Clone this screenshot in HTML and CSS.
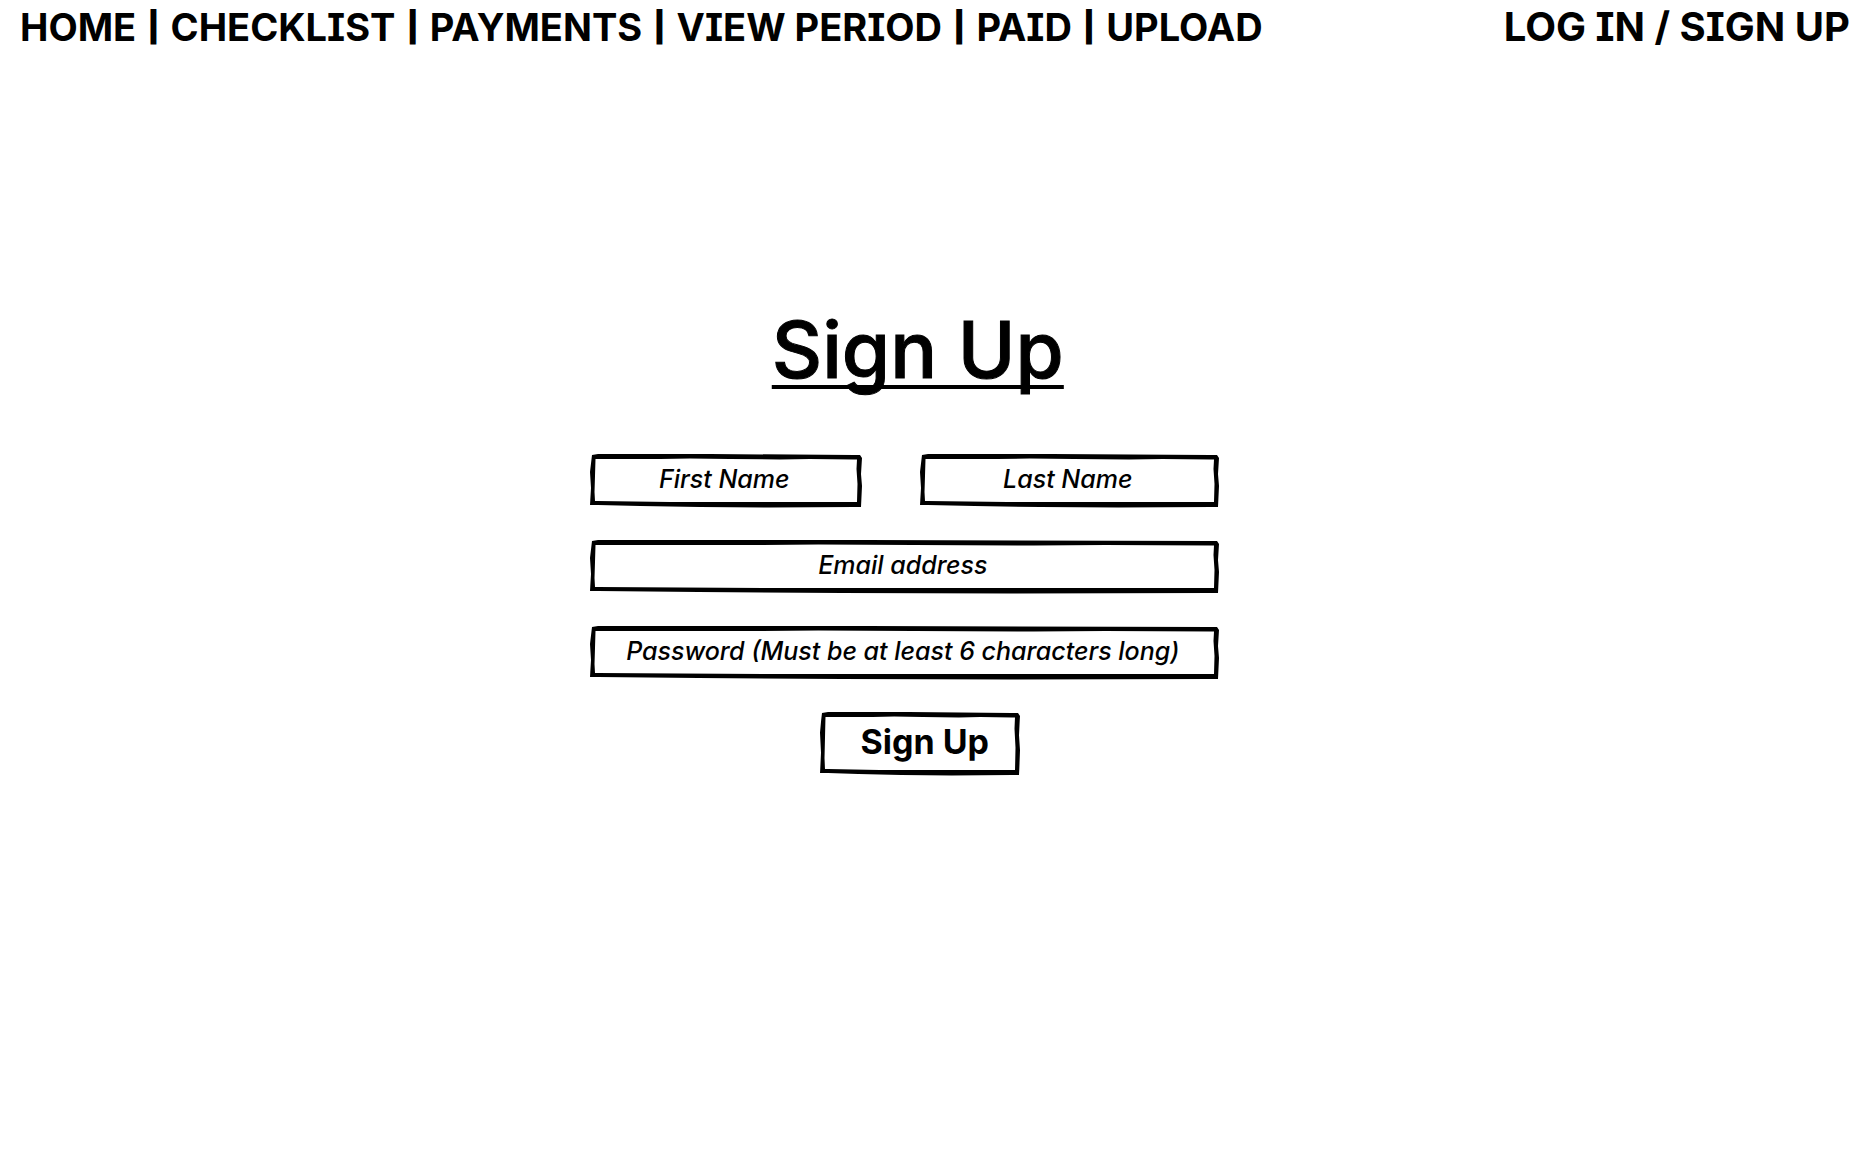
FILE: index.html
```html
<!DOCTYPE html>
<html lang="en">
<head>
<meta charset="utf-8">
<meta name="viewport" content="width=device-width, initial-scale=1">
<title>Sign Up</title>
<link rel="stylesheet" href="styles.css">
</head>
<body>
<header class="topbar">
  <nav class="menu" aria-label="Main">
    <a href="#home">HOME</a><span class="bar">|</span>
    <a href="#checklist">CHECKLIST</a><span class="bar">|</span>
    <a href="#payments">PAYMENTS</a><span class="bar">|</span>
    <a href="#period">VIEW PERIOD</a><span class="bar">|</span>
    <a href="#paid">PAID</a><span class="bar">|</span>
    <a href="#upload">UPLOAD</a>
  </nav>
  <a class="account" href="#login">LOG IN / SIGN UP</a>
</header>
<main class="page">
  <form class="signup">
    <h1 class="title">Sign Up</h1>
    <div class="names">
      <input class="field" type="text" placeholder="First Name" aria-label="First Name">
      <input class="field" type="text" placeholder="Last Name" aria-label="Last Name">
    </div>
    <input class="field" type="email" placeholder="Email address" aria-label="Email address">
    <input class="field" type="password" placeholder="Password (Must be at least 6 characters long)" aria-label="Password">
    <button class="submit" type="submit">Sign Up</button>
  </form>
</main>
</body>
</html>
```
FILE: styles.css
```css
* { box-sizing: border-box; }

body {
  margin: 0;
  background: #fff;
  color: #000;
  font-family: Inter, "Liberation Sans", sans-serif;
  font-feature-settings: "cv08", "cv11";
}

a { color: inherit; text-decoration: none; }

.topbar {
  display: flex;
  justify-content: space-between;
  padding: 2px 24px 0 20px;
  font-size: 40px;
  font-weight: 700;
  line-height: 50px;
  white-space: nowrap;
}

.menu {
  display: flex;
  gap: 12px;
  font-size: 38px;
}

.bar {
  font-size: 28px;
  -webkit-text-stroke: 2px #000;
}

.page { padding: 252px 24px 40px 31.5%; }

.signup {
  display: flex;
  flex-direction: column;
  gap: 32px;
  max-width: 629px;
}

.title {
  align-self: center;
  margin: 0 0 26px 26px;
  font-size: 78px;
  font-weight: 500;
  line-height: 92px;
  text-decoration: underline;
  text-decoration-thickness: 4px;
  text-decoration-skip-ink: none;
  text-underline-offset: 7px;
  -webkit-text-stroke: 1px #000;
}

.names {
  display: grid;
  grid-template-columns: 272fr 299fr;
  gap: 58px;
}

/* Uneven pen-drawn frame, stretched along its edges. */
.field,
.submit {
  border: 8px solid transparent;
  border-image: url("data:image/svg+xml,%3Csvg xmlns='http://www.w3.org/2000/svg' width='272' height='54' viewBox='0 0 272 54'%3E%3Cpath fill-rule='evenodd' d='M2 1L8 0L120 0L264 1L270 1L272 4L271 20L272 32L271 53L264 53L180 53.500L110 53L50 52L8 51L0 51L1 34L0 18ZM5.500 5L5 22L4.500 38L5 47L8 47L80 48L264 48L267 48L267.500 30L266.500 15L267 5.500L264 5.500L220 5L190 5.500L140 5L100 4.500L70 5Z'/%3E%3C/svg%3E") 8 / 8px stretch;
  background: none;
  border-radius: 0;
  color: #000;
  font-family: inherit;
  font-feature-settings: inherit;
  text-align: center;
}

.field {
  width: 100%;
  min-width: 0;
  height: 54px;
  padding: 0 10px 4px 6px;
  font-size: 25px;
  font-style: italic;
  font-weight: 500;
}

.field::placeholder { color: #000; opacity: 1; }

.submit {
  align-self: center;
  width: 200px;
  height: 64px;
  margin-left: 30px;
  padding: 0 0 4px 10px;
  font-size: 34px;
  font-weight: 700;
  line-height: 40px;
}
```
